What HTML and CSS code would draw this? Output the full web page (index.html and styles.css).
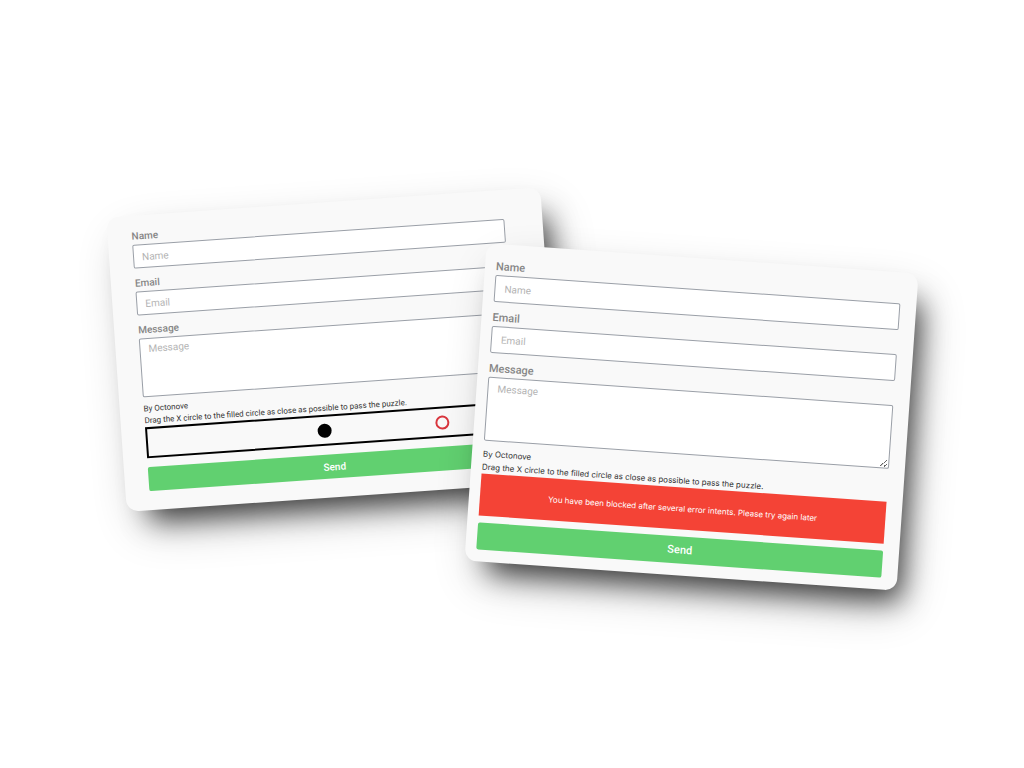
FILE: index.html
```
<!DOCTYPE html>
<html lang="en">
<head>
<meta charset="utf-8">
<meta name="viewport" content="width=device-width, initial-scale=1">
<title>Contact form puzzle</title>
<link rel="stylesheet" href="styles.css">
</head>
<body>
<main class="stage">
  <form class="card card-back">
    <label class="label" for="name-a">Name</label>
    <input class="field" id="name-a" type="text" placeholder="Name">
    <label class="label" for="email-a">Email</label>
    <input class="field" id="email-a" type="email" placeholder="Email">
    <label class="label" for="message-a">Message</label>
    <textarea class="field area" id="message-a" placeholder="Message"></textarea>
    <p class="note">By Octonove</p>
    <p class="note">Drag the X circle to the filled circle as close as possible to pass the puzzle.</p>
    <div class="puzzle">
      <span class="dot goal"></span>
      <button class="dot handle" type="button" aria-label="Drag circle"></button>
    </div>
    <button class="send" type="submit">Send</button>
  </form>

  <form class="card card-front">
    <label class="label" for="name-b">Name</label>
    <input class="field" id="name-b" type="text" placeholder="Name">
    <label class="label" for="email-b">Email</label>
    <input class="field" id="email-b" type="email" placeholder="Email">
    <label class="label" for="message-b">Message</label>
    <textarea class="field area" id="message-b" placeholder="Message"></textarea>
    <p class="note">By Octonove</p>
    <p class="note">Drag the X circle to the filled circle as close as possible to pass the puzzle.</p>
    <p class="blocked" role="alert">You have been blocked after several error intents. Please try again later</p>
    <button class="send" type="submit">Send</button>
  </form>
</main>
</body>
</html>
```
FILE: styles.css
```
* {
  box-sizing: border-box;
}

body {
  margin: 0;
  background: #fff;
  font-family: Roboto, "Liberation Sans", sans-serif;
}

.stage {
  position: relative;
  min-height: 100vh;
  overflow: hidden;
}

.card {
  position: absolute;
  display: flex;
  flex-direction: column;
  background: #f9f9f9;
  border-radius: 12px;
  box-shadow:
    14px 20px 28px -10px rgba(0, 0, 0, 0.7),
    10px 20px 48px -8px rgba(0, 0, 0, 0.3);
}

.card-back {
  left: 11.3%;
  top: 26.3%;
  width: 42.5%;
  padding: 13px 38px 19px 24px;
  transform: rotate(-4deg);
}

.card-front {
  left: 46.4%;
  top: 33.6%;
  width: 42.3%;
  padding: 14px 16px 12px 11px;
  transform: rotate(4deg);
}

.label {
  color: #868686;
  font-size: 11px;
  font-weight: 500;
  line-height: 17px;
}

.field {
  width: 100%;
  height: 27px;
  margin: 0 0 7px;
  padding: 0 9px;
  border: 1px solid #9a9fa7;
  border-radius: 2px;
  background: #fff;
  color: #333;
  font-family: inherit;
  font-size: 10px;
  line-height: 14px;
}

.field::placeholder {
  color: #b4b4b4;
  opacity: 1;
}

.area {
  height: 64px;
  padding-top: 4px;
  resize: vertical;
}

.note {
  margin: 0;
  color: #333;
  font-family: Inter, "Liberation Sans", sans-serif;
  font-size: 8px;
  line-height: 13px;
}

.blocked {
  margin: 0 0 7px;
  background: #f44336;
  color: #fff;
  font-family: Inter, "Liberation Sans", sans-serif;
  font-size: 8px;
  line-height: 42px;
  text-align: center;
}

.send {
  height: 27px;
  padding: 0;
  border: 0;
  border-radius: 2px;
  background: #61d070;
  color: #fff;
  font-family: inherit;
  font-size: 11px;
  font-weight: 500;
}

.card-back .label {
  font-size: 10px;
  line-height: 16px;
}

.card-back .field {
  height: 24px;
  padding-left: 8px;
}

.card-back .area {
  height: 59px;
  margin-bottom: 6px;
  padding-top: 3px;
}

.card-back .note {
  font-family: Roboto, "Liberation Sans", sans-serif;
  line-height: 12px;
}

.card-back .send {
  height: 24px;
  font-size: 10px;
}

.puzzle {
  position: relative;
  height: 31px;
  margin-bottom: 9px;
  border: 2px solid #000;
}

.dot {
  position: absolute;
  top: 50%;
  width: 14px;
  height: 14px;
  padding: 0;
  border-radius: 50%;
  transform: translate(-50%, -50%);
}

.goal {
  left: 48%;
  background: #000;
}

.handle {
  left: 80%;
  border: 2px solid #d9363e;
  background: transparent;
}
```
